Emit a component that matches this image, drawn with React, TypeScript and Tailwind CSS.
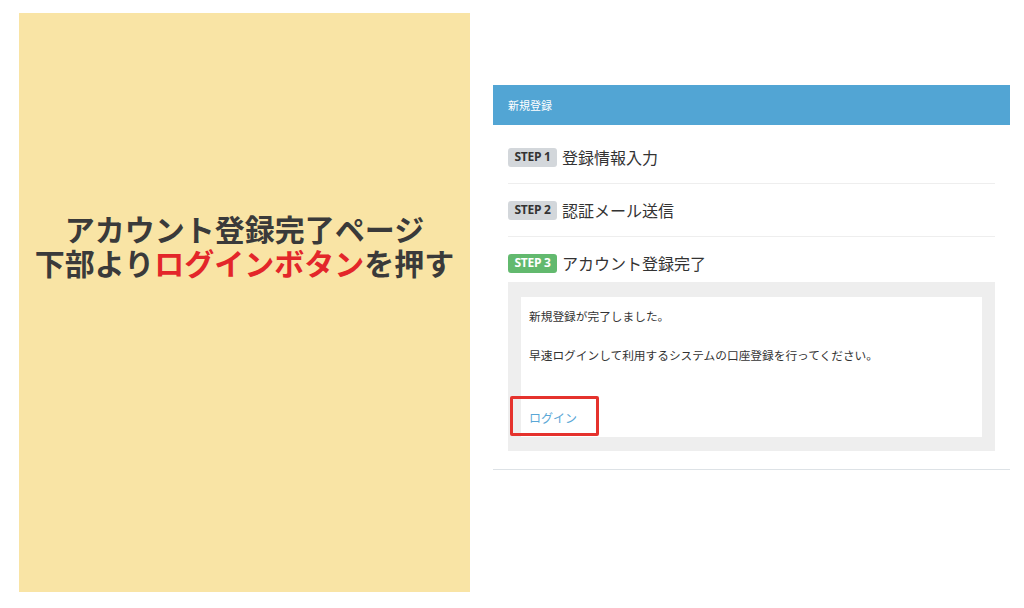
import * as React from "react";

const jp = "font-['Noto_Sans_CJK_JP','Noto_Sans',sans-serif]";

type Step = { label: string; title: string; done?: boolean };

const steps: Step[] = [
  { label: "STEP 1", title: "登録情報入力" },
  { label: "STEP 2", title: "認証メール送信" },
  { label: "STEP 3", title: "アカウント登録完了", done: true },
];

const StepRow = ({ step }: { step: Step }) => (
  <div className="flex items-center h-5 gap-[5px]">
    <span
      className={`h-[19px] w-[49px] rounded-[3px] flex items-center justify-center text-[12px] font-bold font-['Open_Sans',sans-serif] tracking-[-0.3px] ${
        step.done ? "bg-[#62b96e] text-white" : "bg-[#d3d7db] text-[#333]"
      }`}
    >
      {step.label}
    </span>
    <span className="text-[16px] text-[#333] leading-5">{step.title}</span>
  </div>
);

export default function App() {
  return (
    <div className={`w-[1024px] h-[608px] bg-white flex ${jp}`}>
      <div className="ml-[19px] mt-[13px] w-[451px] h-[579px] bg-[#f9e4a5] flex flex-col items-center pt-[198px]">
        <p className="text-[30px] font-bold leading-[34px] text-[#3a3a3a]">アカウント登録完了ページ</p>
        <p className="text-[30px] font-bold leading-[34px] text-[#3a3a3a]">
          下部より<span className="text-[#e3262a]">ログインボタン</span>を押す
        </p>
      </div>

      <div className="ml-[23px] mt-[85px] w-[517px] h-[385px] flex flex-col border-b border-[#dde2e6]">
        <div className="h-[40px] bg-[#52a5d4] px-[15px] flex items-center text-[11px] text-white">新規登録</div>
        <div className="px-[15px] pt-[6px]">
          <div className="py-4">
            <StepRow step={steps[0]} />
          </div>
          <div className="border-t border-[#eeeeee] py-4">
            <StepRow step={steps[1]} />
          </div>
          <div className="border-t border-[#eeeeee] pt-4">
            <StepRow step={steps[2]} />
          </div>
          <div className="mt-[9px] bg-[#eeeeee] px-[13px] pt-[15px] pb-[14px]">
            <div className="relative bg-white px-[8px] pt-[10px] pb-[10px] text-[11.7px] leading-[18px] text-[#333]">
              <p>新規登録が完了しました。</p>
              <p className="mt-[21px]">早速ログインして利用するシステムの口座登録を行ってください。</p>
              <p className="mt-[45px] text-[12px]">
                <a className="text-[#5aa7d6]">ログイン</a>
              </p>
              <div className="absolute left-[-11px] top-[99px] w-[89px] h-[40px] border-[3px] border-[#e5322d] rounded-[2px]" />
            </div>
          </div>
        </div>
      </div>
    </div>
  );
}
